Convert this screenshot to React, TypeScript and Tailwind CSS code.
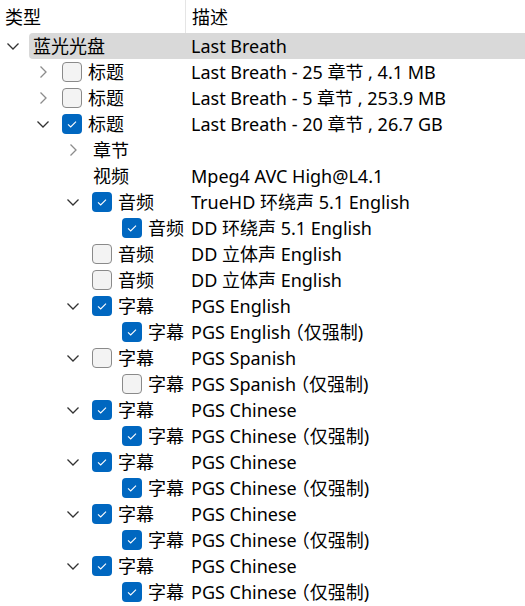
import React from "react";

type Row = {
  level: number;
  chev: "down" | "right" | null;
  cb: "on" | "off" | null;
  name: string;
  desc: string;
  forced?: boolean;
  sel?: boolean;
};

const rows: Row[] = [
  { level: 0, chev: "down", cb: null, name: "蓝光光盘", desc: "Last Breath", sel: true },
  { level: 1, chev: "right", cb: "off", name: "标题", desc: "Last Breath - 25 章节 , 4.1 MB" },
  { level: 1, chev: "right", cb: "off", name: "标题", desc: "Last Breath - 5 章节 , 253.9 MB" },
  { level: 1, chev: "down", cb: "on", name: "标题", desc: "Last Breath - 20 章节 , 26.7 GB" },
  { level: 2, chev: "right", cb: null, name: "章节", desc: "" },
  { level: 2, chev: null, cb: null, name: "视频", desc: "Mpeg4 AVC High@L4.1" },
  { level: 2, chev: "down", cb: "on", name: "音频", desc: "TrueHD 环绕声 5.1 English" },
  { level: 3, chev: null, cb: "on", name: "音频", desc: "DD 环绕声 5.1 English" },
  { level: 2, chev: null, cb: "off", name: "音频", desc: "DD 立体声 English" },
  { level: 2, chev: null, cb: "off", name: "音频", desc: "DD 立体声 English" },
  { level: 2, chev: "down", cb: "on", name: "字幕", desc: "PGS English" },
  { level: 3, chev: null, cb: "on", name: "字幕", desc: "PGS English", forced: true },
  { level: 2, chev: "down", cb: "off", name: "字幕", desc: "PGS Spanish" },
  { level: 3, chev: null, cb: "off", name: "字幕", desc: "PGS Spanish", forced: true },
  { level: 2, chev: "down", cb: "on", name: "字幕", desc: "PGS Chinese" },
  { level: 3, chev: null, cb: "on", name: "字幕", desc: "PGS Chinese", forced: true },
  { level: 2, chev: "down", cb: "on", name: "字幕", desc: "PGS Chinese" },
  { level: 3, chev: null, cb: "on", name: "字幕", desc: "PGS Chinese", forced: true },
  { level: 2, chev: "down", cb: "on", name: "字幕", desc: "PGS Chinese" },
  { level: 3, chev: null, cb: "on", name: "字幕", desc: "PGS Chinese", forced: true },
  { level: 2, chev: "down", cb: "on", name: "字幕", desc: "PGS Chinese" },
  { level: 3, chev: null, cb: "on", name: "字幕", desc: "PGS Chinese", forced: true },
];

const indentCls = ["w-0", "w-[30px]", "w-[60px]", "w-[90px]"];
const nameW = ["w-[154px]", "w-[124px]", "w-[94px]", "w-[64px]"];

function Chevron({ dir }: { dir: "down" | "right" | null }) {
  return (
    <div className="w-[26px] h-[26px] shrink-0 flex items-center justify-center">
      {dir === "down" && (
        <svg width="26" height="26" viewBox="0 0 26 26">
          <path d="M7.5 10.5 L13 16 L18.5 10.5" fill="none" stroke="#333333" strokeWidth="1.3" />
        </svg>
      )}
      {dir === "right" && (
        <svg width="26" height="26" viewBox="0 0 26 26">
          <path d="M10.5 7.5 L16 13 L10.5 18.5" fill="none" stroke="#8c8c8c" strokeWidth="1.3" />
        </svg>
      )}
    </div>
  );
}

function Checkbox({ on }: { on: boolean }) {
  if (on) {
    return (
      <div className="w-[20px] h-[20px] shrink-0 mr-[6px] rounded-[4px] bg-[#0067c0] flex items-center justify-center">
        <svg width="20" height="20" viewBox="0 0 20 20">
          <path d="M6 10.3 L8.7 13 L14 7.6" fill="none" stroke="#ffffff" strokeWidth="1.1" />
        </svg>
      </div>
    );
  }
  return <div className="w-[20px] h-[20px] shrink-0 mr-[6px] rounded-[4px] bg-[#f3f3f3] border border-[#8a8a8a]" />;
}

export default function App() {
  return (
    <div
      className="w-[525px] h-[606px] bg-white text-black overflow-hidden text-[18px] leading-[26px]"
      style={{ fontFamily: '"Noto Sans", "Noto Sans CJK SC", sans-serif' }}
    >
      <div className="flex h-[33px] items-center">
        <div className="w-[186px] h-full border-r border-[#e5e5e5] pl-[5px] flex items-center">类型</div>
        <div className="pl-[6px]">描述</div>
      </div>
      {rows.map((r, i) => (
        <div key={i} className="flex h-[26px] items-center">
          <div className={indentCls[r.level] + " shrink-0"} />
          <Chevron dir={r.chev} />
          <div
            className={
              "flex-1 flex items-center h-[26px] ml-[3px] pl-[3px] " +
              (r.sel ? "bg-[#d9d9d9] rounded-l-[4px]" : "")
            }
          >
            <div className={nameW[r.level] + " shrink-0 flex items-center whitespace-nowrap"}>
              {r.cb && <Checkbox on={r.cb === "on"} />}
              <span className={r.cb ? "" : "ml-[1px]"}>{r.name}</span>
            </div>
            <div className="pl-[5px] whitespace-nowrap">
              {r.desc}
              {r.forced && <span className="ml-[-5px]">（仅强制)</span>}
            </div>
          </div>
        </div>
      ))}
    </div>
  );
}
